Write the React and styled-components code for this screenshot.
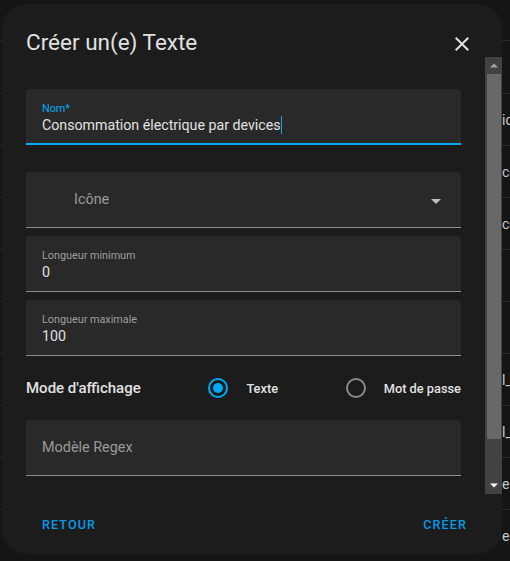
import styled, { createGlobalStyle } from 'styled-components';

const GlobalStyle = createGlobalStyle`
  html, body {
    margin: 0;
    padding: 0;
    background: #151515;
    font-family: Roboto, "Noto Sans", sans-serif;
    overflow: hidden;
  }
`;

const rows = ['', 'iqu', 'co', 'co', '', '', 'l_', 'l_', 'en', 'en'];

const App = () => {
  return (
    <>
      <GlobalStyle />
      <Page>
        <PageHeader />
        {rows.map((txt, i) => (
          <BgRow key={i} first={i === 0}>
            <BgSpacer />
            <BgText>{txt}</BgText>
          </BgRow>
        ))}

        <Dialog>
          <Header>
            <Title>Créer un(e) Texte</Title>
            <CloseButton aria-label="close">
              <svg width="24" height="24" viewBox="0 0 24 24">
                <path
                  fill="#e1e1e1"
                  d="M19 6.41L17.59 5 12 10.59 6.41 5 5 6.41 10.59 12 5 17.59 6.41 19 12 13.41 17.59 19 19 17.59 13.41 12z"
                />
              </svg>
            </CloseButton>
          </Header>

          <Body>
            <Content>
              <Field focused>
                <FloatLabel focused>Nom*</FloatLabel>
                <Value>
                  Consommation électrique par devices<Caret />
                </Value>
              </Field>

              <Field placeholder="true" indent={48} style={{ marginTop: 19 }}>
                <Placeholder>Icône</Placeholder>
                <DropArrow viewBox="0 0 24 24" width="24" height="24">
                  <path fill="#bdbdbd" d="M7 10l5 5 5-5z" />
                </DropArrow>
              </Field>

              <Field>
                <FloatLabel>Longueur minimum</FloatLabel>
                <Value>0</Value>
              </Field>

              <Field>
                <FloatLabel>Longueur maximale</FloatLabel>
                <Value>100</Value>
              </Field>

              <RadioRow>
                <RadioTitle>Mode d'affichage</RadioTitle>
                <RadioOption>
                  <RadioBox>
                    <RadioCircle checked />
                  </RadioBox>
                  <RadioText>Texte</RadioText>
                </RadioOption>
                <RadioOption>
                  <RadioBox>
                    <RadioCircle />
                  </RadioBox>
                  <RadioText>Mot de passe</RadioText>
                </RadioOption>
              </RadioRow>

              <Field placeholder="true">
                <Placeholder>Modèle Regex</Placeholder>
              </Field>
            </Content>

            <Scrollbar>
              <ScrollButton>
                <svg width="8" height="5" viewBox="0 0 8 5">
                  <path fill="#a3a3a3" d="M0 4.5L4 0.5 8 4.5z" />
                </svg>
              </ScrollButton>
              <Thumb />
              <TrackRest />
              <ScrollButton>
                <svg width="8" height="5" viewBox="0 0 8 5">
                  <path fill="#ffffff" d="M0 0.5L8 0.5 4 4.5z" />
                </svg>
              </ScrollButton>
            </Scrollbar>
          </Body>

          <Footer>
            <TextButton>Retour</TextButton>
            <TextButton>Créer</TextButton>
          </Footer>
        </Dialog>
      </Page>
    </>
  );
};

export default App;

const Page = styled.div`
  position: relative;
  width: 510px;
  height: 561px;
  overflow: hidden;
  background: #151515;
`;

const PageHeader = styled.div`
  height: 40px;
  border-bottom: 1px solid #2a2a2a;
`;

const BgRow = styled.div`
  display: flex;
  align-items: center;
  height: ${p => (p.first ? 52 : 51)}px;
  border-bottom: 1px solid #2a2a2a;
`;

const BgSpacer = styled.div`
  width: 502px;
  flex-shrink: 0;
`;

const BgText = styled.span`
  font-size: 14px;
  color: #c8c8c8;
  white-space: nowrap;
`;

const Dialog = styled.div`
  position: absolute;
  left: 2px;
  top: 4px;
  width: 500px;
  height: 550px;
  border-radius: 24px;
  background: #1c1c1c;
  display: flex;
  flex-direction: column;
  overflow: hidden;
`;

const Header = styled.div`
  height: 53px;
  box-sizing: border-box;
  padding: 24px 28px 0 24px;
  display: flex;
  justify-content: space-between;
  align-items: flex-start;
`;

const Title = styled.h2`
  margin: 0;
  font-size: 22.5px;
  line-height: 28px;
  font-weight: 400;
  color: #e1e1e1;
`;

const CloseButton = styled.button`
  margin-top: 4px;
  padding: 0;
  border: none;
  background: none;
  width: 24px;
  height: 24px;
  display: flex;
`;

const Body = styled.div`
  display: flex;
  height: 437px;
`;

const Content = styled.div`
  flex: 1;
  padding: 32px 24px 0 24px;
  overflow: hidden;
  display: flex;
  flex-direction: column;
  gap: 8px;
`;

const Field = styled.div`
  position: relative;
  flex-shrink: 0;
  height: 56px;
  box-sizing: border-box;
  background: #292929;
  border-radius: 4px 4px 0 0;
  border-bottom: ${p => (p.focused ? '2px solid #03a9f4' : '1px solid #8c8c8c')};
  padding: ${p => (p.placeholder ? '0' : '13px')} 16px 0 ${p => p.indent || 16}px;
  display: flex;
  flex-direction: ${p => (p.placeholder ? 'row' : 'column')};
  align-items: ${p => (p.placeholder ? 'center' : 'stretch')};
  justify-content: ${p => (p.placeholder ? 'space-between' : 'flex-start')};
`;

const FloatLabel = styled.div`
  font-size: 10.8px;
  line-height: 14px;
  color: ${p => (p.focused ? '#03a9f4' : '#9e9e9e')};
`;

const Value = styled.div`
  font-size: 14.2px;
  line-height: 18px;
  color: #e1e1e1;
  display: flex;
  align-items: center;
  white-space: nowrap;
`;

const Caret = styled.span`
  display: inline-block;
  width: 1px;
  height: 18px;
  background: #03a9f4;
`;

const Placeholder = styled.div`
  font-size: 14.4px;
  line-height: 56px;
  color: #9a9a9a;
`;

const DropArrow = styled.svg`
  margin-right: -3px;
  margin-top: 2px;
`;

const RadioRow = styled.div`
  flex-shrink: 0;
  height: 48px;
  display: flex;
  align-items: center;
  justify-content: space-between;
`;

const RadioTitle = styled.div`
  font-size: 15px;
  font-weight: 500;
  color: #e1e1e1;
`;

const RadioOption = styled.div`
  display: flex;
  align-items: center;
`;

const RadioBox = styled.div`
  width: 40px;
  height: 40px;
  display: flex;
  align-items: center;
  justify-content: center;
`;

const RadioCircle = styled.div`
  width: 20px;
  height: 20px;
  box-sizing: border-box;
  border-radius: 50%;
  border: 2px solid ${p => (p.checked ? '#03a9f4' : '#8a8a8a')};
  display: flex;
  align-items: center;
  justify-content: center;

  &::after {
    content: '';
    width: 10px;
    height: 10px;
    border-radius: 50%;
    background: ${p => (p.checked ? '#03a9f4' : 'transparent')};
  }
`;

const RadioText = styled.span`
  margin-left: 8px;
  font-size: 12.8px;
  font-weight: 500;
  color: #e1e1e1;
`;

const Scrollbar = styled.div`
  width: 17px;
  flex-shrink: 0;
  background: #424242;
  display: flex;
  flex-direction: column;
`;

const ScrollButton = styled.div`
  height: 17px;
  display: flex;
  align-items: center;
  justify-content: center;
`;

const Thumb = styled.div`
  height: 365px;
  margin: 0 1px 0 2px;
  background: #686868;
`;

const TrackRest = styled.div`
  flex: 1;
`;

const Footer = styled.div`
  flex: 1;
  padding: 13px 27px 0 32px;
  display: flex;
  justify-content: space-between;
  align-items: flex-start;
`;

const TextButton = styled.button`
  border: none;
  background: none;
  height: 36px;
  padding: 0 8px;
  font-family: Roboto, sans-serif;
  font-size: 12.6px;
  font-weight: 500;
  line-height: 36px;
  letter-spacing: 1.1px;
  text-transform: uppercase;
  color: #039be5;
`;
